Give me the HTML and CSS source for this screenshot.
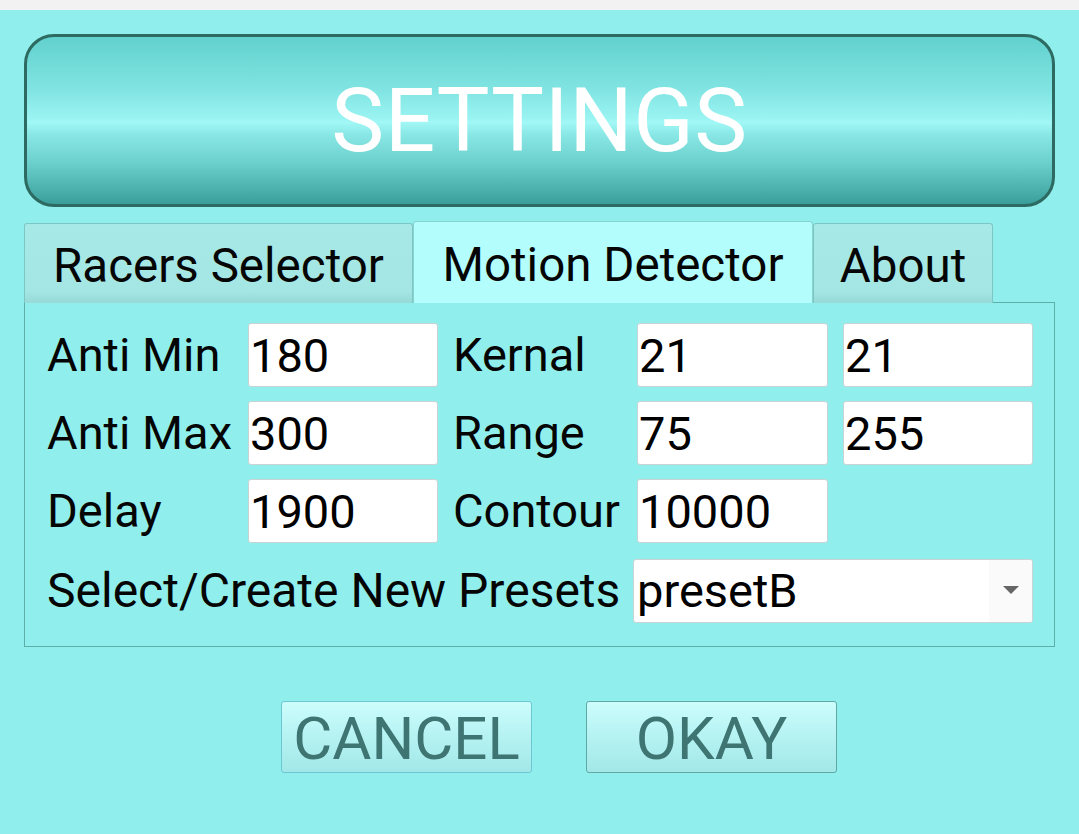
FILE: index.html
```html
<!DOCTYPE html>
<html>
<head>
<meta charset="utf-8">
<title>Settings</title>
<link rel="stylesheet" href="styles.css">
</head>
<body>
<div class="statusbar"></div>
<div class="container">
  <div class="header">SETTINGS</div>
  <div class="tabs">
    <div class="tab tab-racers">Racers Selector</div>
    <div class="tab tab-motion active">Motion Detector</div>
    <div class="tab tab-about">About</div>
  </div>
  <div class="panel">
    <div class="grid">
      <div class="label">Anti Min</div>
      <input class="field" type="text" value="180">
      <div class="label">Kernal</div>
      <input class="field" type="text" value="21">
      <input class="field" type="text" value="21">

      <div class="label">Anti Max</div>
      <input class="field" type="text" value="300">
      <div class="label">Range</div>
      <input class="field" type="text" value="75">
      <input class="field" type="text" value="255">

      <div class="label">Delay</div>
      <input class="field" type="text" value="1900">
      <div class="label">Contour</div>
      <input class="field" type="text" value="10000">
      <div class="empty"></div>

      <div class="label preset-label">Select/Create New Presets</div>
      <div class="select">
        <span class="select-value">presetB</span>
        <span class="select-arrow"><span class="triangle"></span></span>
      </div>
    </div>
  </div>
  <div class="buttons">
    <div class="btn btn-cancel">CANCEL</div>
    <div class="btn btn-okay">OKAY</div>
  </div>
</div>
</body>
</html>
```

FILE: styles.css
```css
html, body {
  margin: 0;
  padding: 0;
}
body {
  background: #90efec;
  font-family: Roboto, "Noto Sans", "Liberation Sans", sans-serif;
  width: 1079px;
  height: 834px;
  overflow: hidden;
}
.statusbar {
  height: 10px;
  background: #f2f2f2;
}
.container {
  padding: 0 24px;
}
.header {
  margin-top: 24px;
  height: 173px;
  box-sizing: border-box;
  border: 3px solid #2c6a62;
  border-radius: 30px;
  background: linear-gradient(to bottom, #62d1ce 0%, #7fe3e1 30%, #9af4f2 49%, #a2f8f6 51%, #8ae8e6 58%, #6cd0cd 75%, #3a9f9a 100%);
  color: #ffffff;
  font-size: 89px;
  display: flex;
  align-items: center;
  justify-content: center;
  letter-spacing: 0.5px;
}
.tabs {
  margin-top: 14px;
  display: flex;
  align-items: flex-end;
  position: relative;
  z-index: 1;
  margin-bottom: -1px;
}
.tab {
  box-sizing: border-box;
  height: 80px;
  display: flex;
  align-items: center;
  justify-content: center;
  padding-top: 4px;
  font-size: 47.5px;
  color: #050505;
  background: linear-gradient(to bottom, #a6e9e7 0%, #a3e6e4 85%, #97d9d7 100%);
  border: 1px solid #7cc7c5;
  border-bottom: none;
  border-radius: 3px 3px 0 0;
  white-space: nowrap;
}
.tab-racers {
  width: 389px;
}
.tab-motion {
  width: 400px;
}
.tab-about {
  width: 180px;
}
.tab.active {
  height: 82px;
  background: #b3fdfc;
  border-color: #86d3d1;
}
.panel {
  box-sizing: border-box;
  height: 345px;
  border: 1px solid #5eaeaa;
  padding: 20px 21px 0 22px;
}
.grid {
  display: grid;
  grid-template-columns: 186px 190px 169px 191px 190px;
  grid-auto-rows: 64px;
  column-gap: 15px;
  row-gap: 14px;
}
.label {
  font-size: 47px;
  line-height: 64px;
  color: #050505;
  white-space: nowrap;
}
.field {
  box-sizing: border-box;
  width: 100%;
  height: 64px;
  margin: 0;
  padding: 0 1px;
  border: 1px solid #c9d3d3;
  border-radius: 3px;
  background: #ffffff;
  font-family: inherit;
  font-size: 47px;
  color: #000000;
  outline: none;
}
.preset-label {
  grid-column: 1 / 4;
  margin-top: 2px;
  font-size: 48px;
}
.select {
  grid-column: 4 / 6;
  margin-top: 2px;
  margin-left: -4px;
  box-sizing: border-box;
  height: 64px;
  border: 1px solid #c9d3d3;
  border-radius: 3px;
  background: #ffffff;
  display: flex;
  align-items: stretch;
  overflow: hidden;
}
.select-value {
  flex: 1;
  font-size: 47px;
  line-height: 62px;
  padding-left: 3px;
  color: #000000;
}
.select-arrow {
  width: 43px;
  background: #fafafa;
  display: flex;
  align-items: center;
  justify-content: center;
}
.triangle {
  width: 0;
  height: 0;
  border-left: 8px solid transparent;
  border-right: 8px solid transparent;
  border-top: 8px solid #666666;
  margin-bottom: 2px;
}
.buttons {
  margin-top: 54px;
  display: flex;
  justify-content: center;
  gap: 54px;
  padding-left: 39px;
}
.btn {
  box-sizing: border-box;
  width: 251px;
  height: 72px;
  border-radius: 3px;
  background: linear-gradient(to bottom, #cdfdfd 0%, #b5f2f2 50%, #a3e8e8 100%);
  color: #3e7471;
  font-size: 60px;
  display: flex;
  align-items: center;
  justify-content: center;
  padding-top: 2px;
}
.btn-cancel {
  border: 1px solid #6bc8d3;
}
.btn-okay {
  border: 1px solid #5ea9a4;
}
```
